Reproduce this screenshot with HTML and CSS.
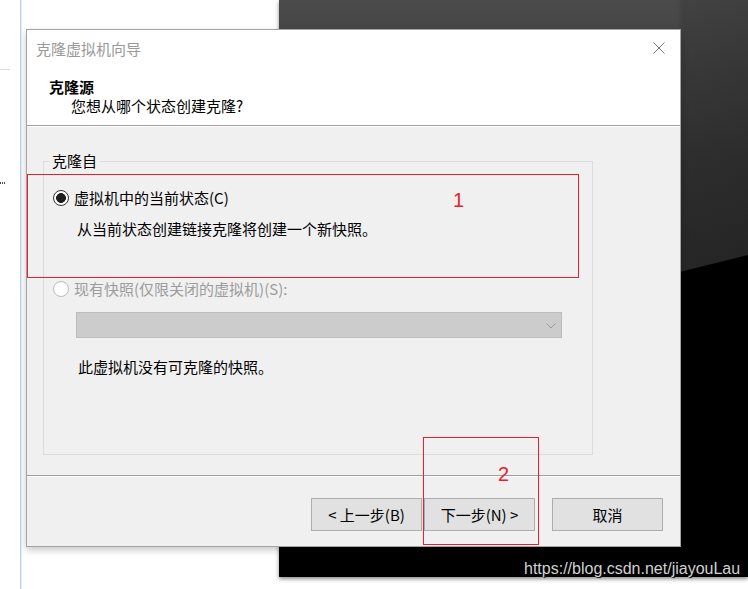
FILE: index.html
```html
<!DOCTYPE html>
<html lang="zh-CN">
<head>
<meta charset="utf-8">
<title>克隆虚拟机向导</title>
<link rel="stylesheet" href="styles.css">
</head>
<body>
<div class="desk">
  <div class="side-line"></div>
  <div class="side-rule"></div>
  <div class="side-dots"></div>

  <div class="dark-win">
    <svg class="wall" width="469" height="577" viewBox="0 0 469 577" aria-hidden="true">
      <path d="M0,400 Q220,315 469,255 L469,577 L0,577 Z" fill="#000"/>
    </svg>
  </div>
  <span class="watermark">https://blog.csdn.net/jiayouLau</span>

  <div class="dialog">
    <div class="header">
      <div class="titlebar">
        <span class="title">克隆虚拟机向导</span>
        <svg class="close" width="12" height="12" viewBox="0 0 12 12" aria-hidden="true">
          <path d="M0.5,0.5 L11.5,11.5 M11.5,0.5 L0.5,11.5" stroke="#777" stroke-width="1" fill="none"/>
        </svg>
      </div>
      <div class="h-main">克隆源</div>
      <div class="h-sub">您想从哪个状态创建克隆?</div>
    </div>

    <div class="body">
      <fieldset class="group">
        <legend>克隆自</legend>
        <div class="opt"><span class="radio checked"></span><span>虚拟机中的当前状态(C)</span></div>
        <div class="desc">从当前状态创建链接克隆将创建一个新快照。</div>
        <div class="opt disabled"><span class="radio"></span><span>现有快照(仅限关闭的虚拟机)(S):</span></div>
        <div class="select">
          <svg width="10" height="6" viewBox="0 0 10 6" aria-hidden="true">
            <path d="M0.5,0.5 L5,5 L9.5,0.5" stroke="#9a9a9a" stroke-width="1" fill="none"/>
          </svg>
        </div>
        <div class="note">此虚拟机没有可克隆的快照。</div>
      </fieldset>
    </div>

    <div class="footer">
      <button class="btn">&lt; 上一步(B)</button>
      <button class="btn btn-next">下一步(N) &gt;</button>
      <button class="btn btn-cancel">取消</button>
    </div>
  </div>

  <div class="mark mark-1"></div>
  <span class="num num-1">1</span>
  <div class="mark mark-2"></div>
  <span class="num num-2">2</span>
</div>
</body>
</html>
```

FILE: styles.css
```css
html, body {
  margin: 0;
  padding: 0;
  background: #fff;
}

.desk {
  position: relative;
  width: 748px;
  height: 589px;
  overflow: hidden;
  background: #fff;
  font-family: "Noto Sans CJK SC", "Microsoft YaHei", sans-serif;
  font-size: 15px;
  color: #000;
}

/* background page decorations */
.side-line {
  position: absolute;
  left: 20px;
  top: 0;
  width: 1px;
  height: 589px;
  background: #bfd4ee;
  box-shadow: 1px 0 0 #e2ecf8;
}

.side-rule {
  position: absolute;
  left: 0;
  top: 69px;
  width: 10px;
  height: 1px;
  background: #d9d9d9;
}

.side-dots {
  position: absolute;
  left: 0;
  top: 182px;
  width: 6px;
  height: 2px;
  background: repeating-linear-gradient(90deg, #3a4a78 0 1px, transparent 1px 2px);
}

/* dark window behind */
.dark-win {
  position: absolute;
  left: 279px;
  top: 0;
  width: 469px;
  height: 577px;
  background:
    linear-gradient(90deg, rgba(0,0,0,0) 0, rgba(0,0,0,0) 398px, rgba(0,0,0,0.12) 404px, rgba(0,0,0,0.16) 469px),
    linear-gradient(180deg, #4b4b4b 0, #404040 70px, #343434 160px, #2c2c2c 260px);
  box-shadow: 0 2px 4px rgba(0,0,0,0.45);
}

.wall {
  display: block;
}

.watermark {
  position: absolute;
  left: 524px;
  top: 561px;
  font-family: "Liberation Sans", Arial, sans-serif;
  font-size: 16px;
  line-height: 16px;
  color: #d2d2d2;
  text-shadow: 1px 1px 1px #000;
  white-space: nowrap;
}

/* dialog */
.dialog {
  position: absolute;
  left: 26px;
  top: 29px;
  width: 653px;
  border: 1px solid #a3a3a3;
  background: #f0f0f0;
  display: flex;
  flex-direction: column;
  box-shadow: 0 3px 7px rgba(0,0,0,0.22);
}

.header {
  height: 95px;
  background: #fff;
  border-bottom: 1px solid #a0a0a0;
  display: flex;
  flex-direction: column;
}

.titlebar {
  height: 37px;
  display: flex;
  align-items: center;
  justify-content: space-between;
  padding: 0 15px 0 9px;
}

.title {
  color: #999;
  line-height: 37px;
}

.close {
  display: block;
  margin-top: -2px;
}

.h-main {
  margin-top: 10px;
  padding-left: 22px;
  line-height: 19px;
  font-weight: bold;
}

.h-sub {
  padding-left: 44px;
  line-height: 19px;
}

.body {
  box-sizing: border-box;
  height: 349px;
  border-top: 1px solid #fff;
  padding: 24px 0 0 16px;
}

.group {
  box-sizing: border-box;
  width: 550px;
  height: 304px;
  margin: 0;
  padding: 0;
  border: 1px solid #dcdcdc;
  min-width: 0;
}

.group legend {
  margin-left: 5px;
  padding: 0 3px;
  line-height: 20px;
}

.opt {
  display: flex;
  align-items: center;
  margin-left: 9px;
  margin-top: 17px;
  line-height: 20px;
  height: 20px;
}

.opt.disabled {
  margin-top: 40px;
  color: #9c9c9c;
}

.radio {
  box-sizing: border-box;
  width: 16px;
  height: 16px;
  border-radius: 50%;
  border: 1px solid #333;
  background: #fff;
  margin-right: 5px;
  flex: none;
}

.radio.checked {
  background: radial-gradient(circle, #1e1e1e 0 4.6px, #fff 5.2px);
}

.disabled .radio {
  border-color: #bcbcbc;
}

.desc {
  margin-top: 11px;
  margin-left: 33px;
  line-height: 20px;
}

.select {
  box-sizing: border-box;
  margin-top: 13px;
  margin-left: 32px;
  width: 486px;
  height: 26px;
  background: #cccccc;
  border: 1px solid #bdbdbd;
  display: flex;
  align-items: center;
  justify-content: flex-end;
  padding-right: 5px;
}

.select svg {
  display: block;
  margin-top: 1px;
}

.note {
  margin-top: 19px;
  margin-left: 34px;
  line-height: 20px;
}

.footer {
  height: 71px;
  box-sizing: border-box;
  border-top: 1px solid #a0a0a0;
  box-shadow: inset 0 1px 0 #fff;
  padding: 22px 17px 16px 0;
  display: flex;
  justify-content: flex-end;
  align-items: flex-start;
}

.btn {
  box-sizing: border-box;
  width: 111px;
  height: 33px;
  margin: 0;
  padding: 0;
  background: #e1e1e1;
  border: 1px solid #adadad;
  border-radius: 0;
  font-family: "Noto Sans CJK SC", "Microsoft YaHei", sans-serif;
  font-size: 15px;
  color: #000;
  line-height: 31px;
  text-align: center;
}

.btn-next {
  margin-left: 2px;
}

.btn-cancel {
  margin-left: 17px;
}

/* red annotation overlays */
.mark {
  position: absolute;
  box-sizing: border-box;
  border: 1px solid #e8202c;
}

.mark-1 {
  left: 27px;
  top: 174px;
  width: 552px;
  height: 104px;
}

.mark-2 {
  left: 423px;
  top: 437px;
  width: 116px;
  height: 108px;
}

.num {
  position: absolute;
  font-family: "Liberation Sans", Arial, sans-serif;
  font-size: 20px;
  line-height: 20px;
  color: #e8202c;
}

.num-1 {
  left: 453px;
  top: 190px;
}

.num-2 {
  left: 498px;
  top: 464px;
}
```
